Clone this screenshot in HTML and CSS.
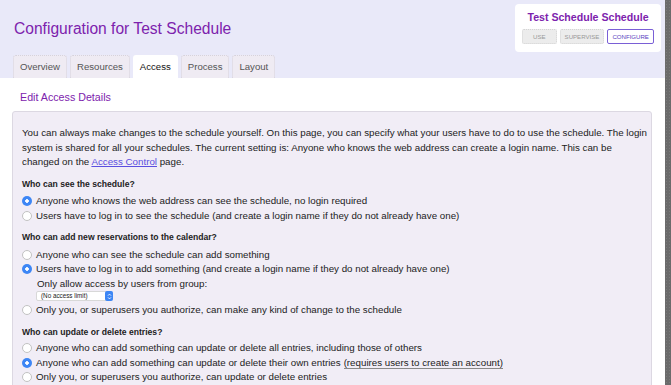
FILE: index.html
```html
<!DOCTYPE html>
<html>
<head>
    <meta charset="utf-8">
    <title>Configuration for Test Schedule</title>
    <link rel="stylesheet" href="styles.css">
</head>
<body>
    <div class="page">
        <div class="main">
            <header class="top">
                <div class="head-left">
                    <h1 class="title">Configuration for Test Schedule</h1>
                    <nav class="tabs">
                        <span class="tab">Overview</span>
                        <span class="tab">Resources</span>
                        <span class="tab active">Access</span>
                        <span class="tab">Process</span>
                        <span class="tab">Layout</span>
                    </nav>
                </div>
                <div class="sched-card">
                    <div class="sched-name">Test Schedule Schedule</div>
                    <div class="mode-btns">
                        <span class="mode-btn use">USE</span>
                        <span class="mode-btn">SUPERVISE</span>
                        <span class="mode-btn current">CONFIGURE</span>
                    </div>
                </div>
            </header>

            <section class="content">
                <h2 class="section-title">Edit Access Details</h2>
                <div class="panel">
                    <p class="intro">You can always make changes to the schedule yourself. On this page, you can specify what your users have to do to use the schedule. The login system is shared for all your schedules. The current setting is: Anyone who knows the web address can create a login name. This can be changed on the <a href="#">Access Control</a> page.</p>

                    <div class="question">Who can see the schedule?</div>
                    <label class="opt"><input type="radio" name="see" checked> Anyone who knows the web address can see the schedule, no login required</label>
                    <label class="opt"><input type="radio" name="see"> Users have to log in to see the schedule (and create a login name if they do not already have one)</label>

                    <div class="question">Who can add new reservations to the calendar?</div>
                    <label class="opt"><input type="radio" name="add"> Anyone who can see the schedule can add something</label>
                    <label class="opt"><input type="radio" name="add" checked> Users have to log in to add something (and create a login name if they do not already have one)</label>
                    <div class="group-limit">
                        <div class="group-label">Only allow access by users from group:</div>
                        <div class="fake-select">
                            <span class="sel-text">(No access limit)</span>
                            <span class="sel-arrows">
                                <svg width="5" height="7" viewBox="0 0 5 7"><path d="M1 2.6 L2.5 1.1 L4 2.6 M1 4.4 L2.5 5.9 L4 4.4" fill="none" stroke="#fff" stroke-width="0.9"/></svg>
                            </span>
                        </div>
                    </div>
                    <label class="opt"><input type="radio" name="add"> Only you, or superusers you authorize, can make any kind of change to the schedule</label>

                    <div class="question last">Who can update or delete entries?</div>
                    <label class="opt"><input type="radio" name="upd"> Anyone who can add something can update or delete all entries, including those of others</label>
                    <label class="opt"><input type="radio" name="upd" checked> Anyone who can add something can update or delete their own entries <span class="note">(requires users to create an account)</span></label>
                    <label class="opt"><input type="radio" name="upd"> Only you, or superusers you authorize, can update or delete entries</label>
                </div>
            </section>
        </div>
        <div class="edge"></div>
    </div>
</body>
</html>
```

FILE: styles.css
```css
html, body {
    margin: 0;
    height: 100%;
}
body {
    font-family: "Liberation Sans", Arial, sans-serif;
    color: #222;
    background: #fff;
    overflow: hidden;
}
.page {
    display: flex;
    height: 100%;
}
.main {
    flex: 1;
    min-width: 0;
}
.edge {
    width: 6px;
    background: #6b6b6b;
    background-image: radial-gradient(#7a7a7a 0.6px, transparent 0.8px);
    background-size: 3px 3px;
}
.top {
    background: #e9e9f9;
    display: flex;
    justify-content: space-between;
    align-items: flex-start;
    height: 78px;
    padding: 0 4px 0 13px;
}
.title {
    margin: 20px 0 0 1px;
    font-size: 15.6px;
    font-weight: normal;
    color: #7d22ad;
    line-height: 18px;
}
.tabs {
    display: flex;
    gap: 3px;
    margin-top: 17px;
}
.tab {
    height: 22px;
    line-height: 22px;
    padding: 0 6px;
    font-size: 9.6px;
    color: #555;
    background: #efebf3;
    border: 1px dotted #d6d2dc;
    border-bottom: none;
    border-radius: 3px 3px 0 0;
}
.tab.active {
    background: #fff;
    color: #111;
    border-color: #fff;
}
.sched-card {
    margin-top: 4px;
    width: 146px;
    height: 48px;
    background: #fff;
    border-radius: 4px;
    box-sizing: border-box;
    padding: 7px 0 0;
    text-align: center;
}
.sched-name {
    font-size: 10.6px;
    font-weight: bold;
    color: #7d22ad;
    line-height: 13px;
}
.mode-btns {
    display: flex;
    justify-content: center;
    gap: 3px;
    margin-top: 5px;
}
.mode-btn {
    font-size: 6.1px;
    line-height: 13px;
    height: 13px;
    padding: 0 4px;
    color: #999;
    background: #ececec;
    border: 1px dotted #d4d4d4;
    border-radius: 2px;
}
.mode-btn.use {
    padding: 0 10px;
}
.mode-btn.current {
    background: #fff;
    color: #5a3fc0;
    border: 1px solid #7a5fd6;
}
.content {
    padding: 12px 13px 0 12px;
}
.section-title {
    margin: 0 0 7px 8px;
    font-size: 10.7px;
    font-weight: normal;
    color: #7d22ad;
    line-height: 14px;
}
.panel {
    background: #f1edf6;
    border: 1px solid #dcd8e2;
    border-radius: 3px;
    padding: 14px 2px 20px 9px;
    font-size: 9.75px;
    line-height: 14.5px;
}
.intro {
    margin: 0;
    max-width: 628px;
}
.intro a {
    color: #5b4fe0;
}
.question {
    font-size: 8.6px;
    font-weight: bold;
    margin: 7px 0 3.5px;
    line-height: 14px;
}
.opt + .question {
    margin-top: 7px;
}
.question.last {
    margin-bottom: 2.5px;
}
.opt {
    display: flex;
    align-items: center;
    height: 14.5px;
    white-space: nowrap;
}
.opt input {
    appearance: none;
    -webkit-appearance: none;
    width: 10px;
    height: 10px;
    margin: 0 4px 0 0;
    border-radius: 50%;
    border: 1px solid #c2c2c2;
    background: #fff;
    box-sizing: border-box;
    flex: none;
}
.opt input:checked {
    border: none;
    background: radial-gradient(circle, #fff 0 1.5px, #3d86f5 2.1px);
}
.note {
    margin-left: 3px;
    border-bottom: 1px solid #888;
    line-height: 11px;
}
.group-limit {
    padding-left: 15px;
}
.group-label {
    line-height: 13px;
}
.fake-select {
    display: flex;
    align-items: center;
    width: 77px;
    height: 10px;
    margin: 1.5px 0 2px -1px;
    background: #fff;
    border: 1px solid #d8d8d8;
    border-radius: 2px;
    box-sizing: border-box;
}
.sel-text {
    flex: 1;
    font-size: 6.3px;
    line-height: 8px;
    padding-left: 4px;
    color: #222;
}
.sel-arrows {
    display: flex;
    align-items: center;
    justify-content: center;
    width: 8px;
    height: 10px;
    margin-right: -1px;
    background: #3d86f5;
    border-radius: 2px;
}
```
